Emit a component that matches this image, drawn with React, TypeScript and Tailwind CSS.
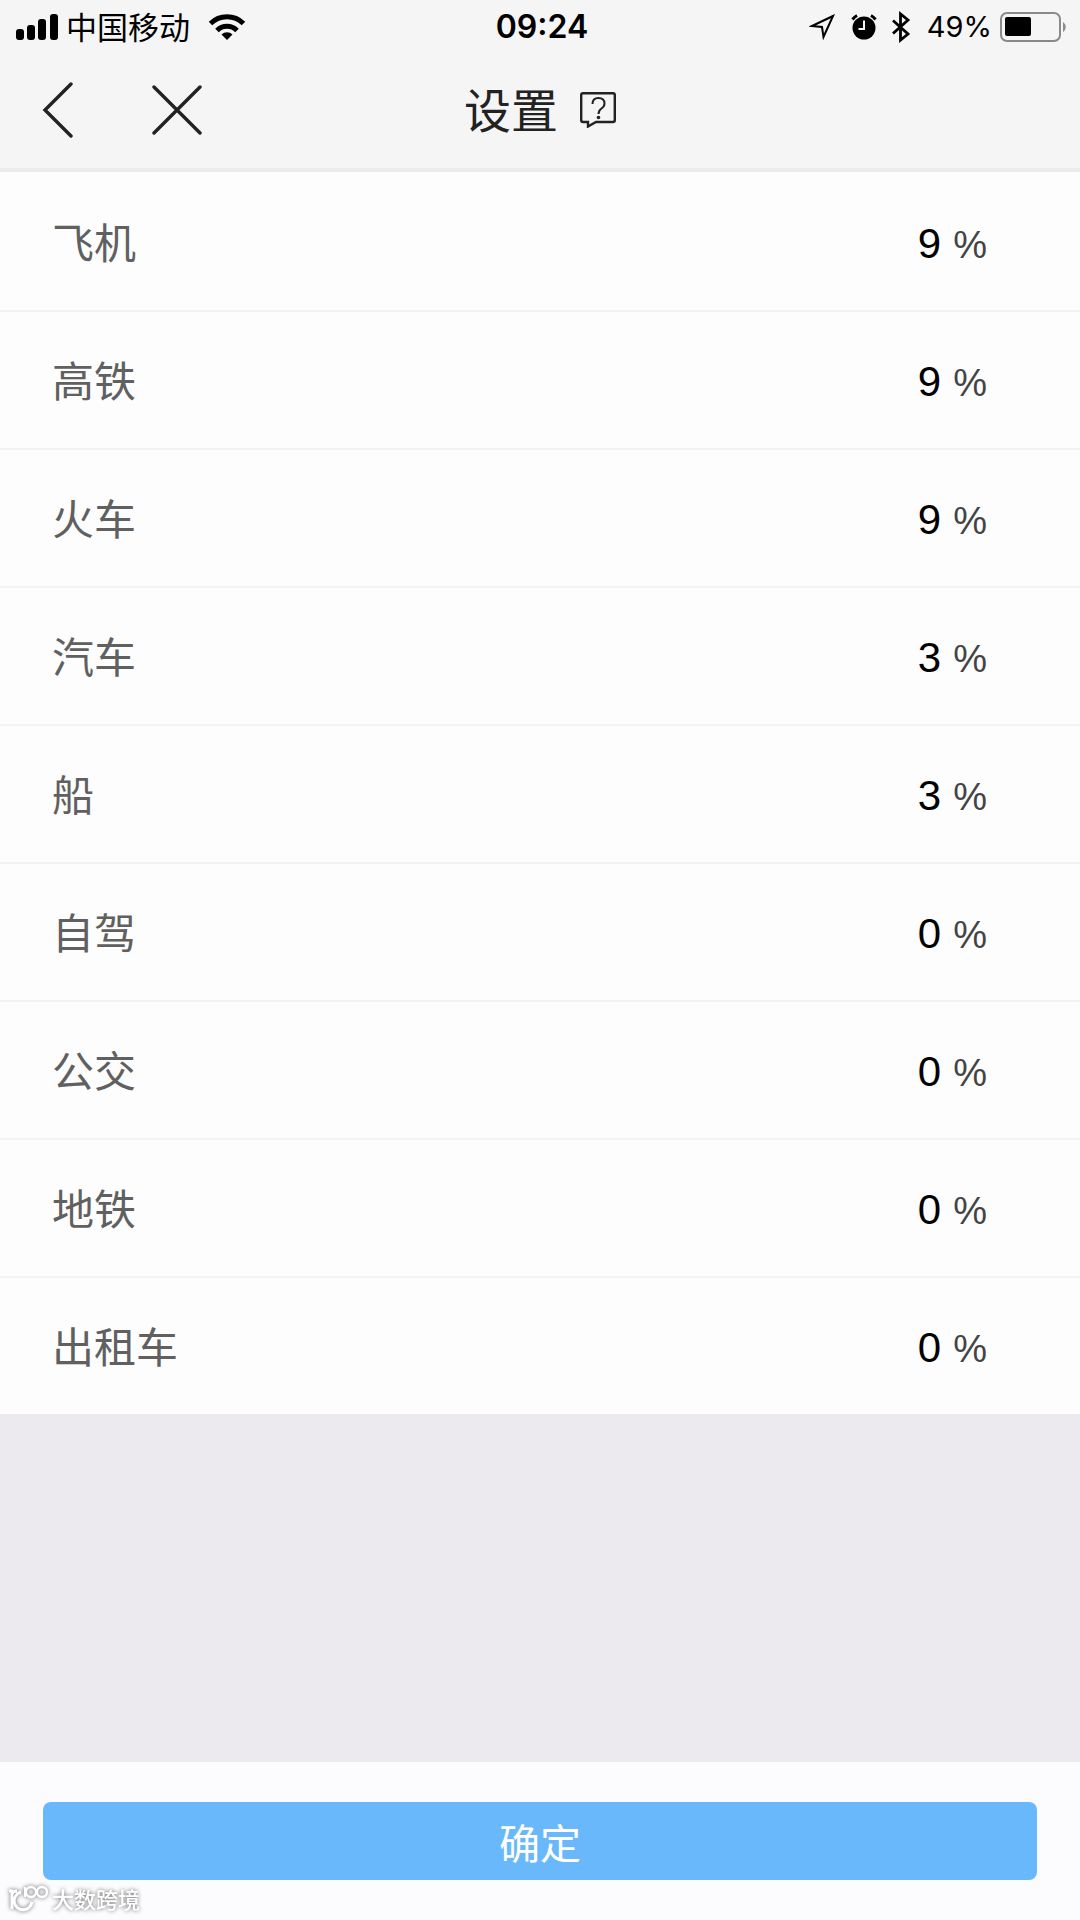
import { useState } from "react";
import type { FormEvent } from "react";

type Rate = {
  id: string;
  label: string;
  value: string;
};

const INITIAL_RATES: Rate[] = [
  { id: "plane", label: "飞机", value: "9" },
  { id: "high-speed-rail", label: "高铁", value: "9" },
  { id: "train", label: "火车", value: "9" },
  { id: "coach", label: "汽车", value: "3" },
  { id: "ship", label: "船", value: "3" },
  { id: "self-drive", label: "自驾", value: "0" },
  { id: "bus", label: "公交", value: "0" },
  { id: "subway", label: "地铁", value: "0" },
  { id: "taxi", label: "出租车", value: "0" },
];

function SignalIcon() {
  return (
    <svg width="42" height="26" viewBox="0 0 42 26" aria-hidden="true">
      <rect x="0" y="15" width="8" height="11" rx="3" />
      <rect x="11" y="11" width="8" height="15" rx="3" />
      <rect x="22" y="5" width="8" height="21" rx="3" />
      <rect x="34" y="0" width="8" height="26" rx="3" />
    </svg>
  );
}

function WifiIcon() {
  return (
    <svg width="38" height="28" viewBox="0 0 38 28" aria-hidden="true">
      <g fill="none" stroke="#000" strokeWidth="5">
        <path d="M2.5 10.5 A23.5 23.5 0 0 1 35.5 10.5" />
        <path d="M9 17.5 A14 14 0 0 1 29 17.5" />
      </g>
      <path d="M19 27 L13.5 21.5 A8 8 0 0 1 24.5 21.5 Z" />
    </svg>
  );
}

function LocationIcon() {
  return (
    <svg width="26" height="26" viewBox="0 0 26 26" aria-hidden="true">
      <path
        d="M24 2 L3 12 L13 13 L14.5 23 Z"
        fill="none"
        stroke="#000"
        strokeWidth="2"
      />
    </svg>
  );
}

function AlarmIcon() {
  return (
    <svg width="26" height="26" viewBox="0 0 26 26" aria-hidden="true">
      <circle cx="13" cy="14" r="11.5" />
      <path
        d="M1.5 5.5 A14 14 0 0 1 6 1.5 M20 1.5 A14 14 0 0 1 24.5 5.5"
        fill="none"
        stroke="#000"
        strokeWidth="3"
      />
      <path
        d="M13 6.5 V15 H7.5"
        fill="none"
        stroke="#f5f5f5"
        strokeWidth="2"
      />
    </svg>
  );
}

function BluetoothIcon() {
  return (
    <svg width="20" height="32" viewBox="0 0 20 32" aria-hidden="true">
      <path
        d="M2 9.5 L17 23 L9.5 29 V3 L17 9 L2 22.5"
        fill="none"
        stroke="#000"
        strokeWidth="2.8"
      />
    </svg>
  );
}

function BatteryIcon() {
  return (
    <svg width="68" height="30" viewBox="0 0 68 30" aria-hidden="true">
      <rect
        x="1"
        y="1"
        width="59"
        height="28"
        rx="6"
        fill="none"
        stroke="#8a8a8a"
        strokeWidth="2"
      />
      <rect x="5" y="5" width="26" height="19" rx="2" />
      <path d="M63 10 A6 6 0 0 1 63 20 Z" fill="#8a8a8a" />
    </svg>
  );
}

function StatusBar() {
  return (
    <div className="grid h-[54px] grid-cols-3 items-center pl-4 pr-3 text-black">
      <div className="flex items-center">
        <SignalIcon />
        <span className="ml-2 mr-[18px] pb-0.5 text-[31px] leading-8">
          中国移动
        </span>
        <WifiIcon />
      </div>
      <span className="text-center font-['Inter',sans-serif] text-[32px] font-semibold leading-8">
        09:24
      </span>
      <div className="flex items-center justify-end">
        <LocationIcon />
        <span className="ml-4">
          <AlarmIcon />
        </span>
        <span className="ml-[14px]">
          <BluetoothIcon />
        </span>
        <span className="ml-4 mr-2 font-['Inter',sans-serif] text-[29px] leading-8">
          49%
        </span>
        <BatteryIcon />
      </div>
    </div>
  );
}

function NavBar() {
  return (
    <nav className="grid h-[112px] grid-cols-3 items-center px-10 text-[#222]">
      <div className="flex items-center gap-[78px]">
        <button type="button" aria-label="返回">
          <svg width="34" height="56" viewBox="0 0 34 56" aria-hidden="true">
            <path
              d="M31 2 L5 28 L31 54"
              fill="none"
              stroke="currentColor"
              strokeWidth="3.4"
              strokeLinecap="round"
            />
          </svg>
        </button>
        <button type="button" aria-label="关闭">
          <svg width="50" height="50" viewBox="0 0 50 50" aria-hidden="true">
            <path
              d="M2 2 L48 48 M48 2 L2 48"
              fill="none"
              stroke="currentColor"
              strokeWidth="3.4"
              strokeLinecap="round"
            />
          </svg>
        </button>
      </div>
      <div className="flex items-center justify-center gap-[22px]">
        <h1 className="pb-1 text-[47px] leading-[56px]">设置</h1>
        <button type="button" aria-label="帮助">
          <svg width="36" height="36" viewBox="0 0 36 36" aria-hidden="true">
            <g fill="none" stroke="currentColor" strokeWidth="2.4">
              <path d="M3 1.2 H33 Q34.8 1.200 34.800 3 V28 Q34.800 30 33 30 H16 L8 34.500 V30 H3 Q1.200 30 1.200 28 V3 Q1.200 1.200 3 1.200 Z" />
              <path
                d="M12.5 12 Q12.5 6 18.5 6 Q24.5 6 24.5 11.5 Q24.5 14.5 21.5 16.5 Q18.5 18.5 18.5 22"
                strokeWidth="2"
              />
            </g>
            <circle cx="18.5" cy="25.5" r="1.8" fill="currentColor" />
          </svg>
        </button>
      </div>
    </nav>
  );
}

function Watermark() {
  return (
    <div className="absolute bottom-1 left-2 flex items-center gap-1 text-white drop-shadow-[0_0_2px_#666]">
      <svg width="40" height="30" viewBox="0 0 40 30" aria-hidden="true">
        <g fill="none" stroke="currentColor" strokeWidth="3">
          <path d="M1 7 H4 V25 M4 11 Q5 7 9 7" />
          <path d="M13 8 A9 9 0 1 0 24 18" />
          <path d="M17 3 V13" strokeWidth="2" />
          <circle cx="23" cy="8" r="5" strokeWidth="2.4" />
          <circle cx="34" cy="8" r="5" strokeWidth="2.4" />
        </g>
      </svg>
      <span className="pb-0.5 text-[22px] font-medium leading-8">大数跨境</span>
    </div>
  );
}

export default function App() {
  const [rates, setRates] = useState<Rate[]>(INITIAL_RATES);

  const updateRate = (id: string, value: string) => {
    setRates((prev) =>
      prev.map((rate) => (rate.id === id ? { ...rate, value } : rate))
    );
  };

  const handleSubmit = (event: FormEvent) => {
    event.preventDefault();
  };

  return (
    <div className="relative flex min-h-screen flex-col bg-[#ece9ef] font-['Noto_Sans_CJK_SC',sans-serif]">
      <header className="border-b-4 border-[#ebebeb] bg-[#f5f5f5] pb-0.5">
        <StatusBar />
        <NavBar />
      </header>

      <form onSubmit={handleSubmit} className="flex flex-1 flex-col">
        <div className="bg-[#fdfdfd]">
          {rates.map((rate) => (
            <div
              key={rate.id}
              className="flex h-[138px] items-center justify-between border-t-2 border-[#f3f3f3] pl-[52px] pr-[93px] first:border-transparent"
            >
              <label
                htmlFor={rate.id}
                className="pb-0.5 text-[42px] leading-[56px] text-[#606060]"
              >
                {rate.label}
              </label>
              <div className="flex items-baseline gap-3 pt-1 font-['Liberation_Sans',sans-serif]">
                <input
                  id={rate.id}
                  inputMode="numeric"
                  value={rate.value}
                  onChange={(event) => updateRate(rate.id, event.target.value)}
                  className="w-24 bg-transparent text-right text-[42px] leading-[56px] text-black outline-none"
                />
                <span className="text-[38px] leading-[56px] text-[#444]">%</span>
              </div>
            </div>
          ))}
        </div>

        <div className="mt-auto bg-[#fcfbfe] px-[43px] py-10">
          <button
            type="submit"
            className="h-[78px] w-full rounded-lg bg-[#69b8fc] text-[41px] leading-[56px] text-white"
          >
            确定
          </button>
        </div>
      </form>

      <Watermark />
    </div>
  );
}
